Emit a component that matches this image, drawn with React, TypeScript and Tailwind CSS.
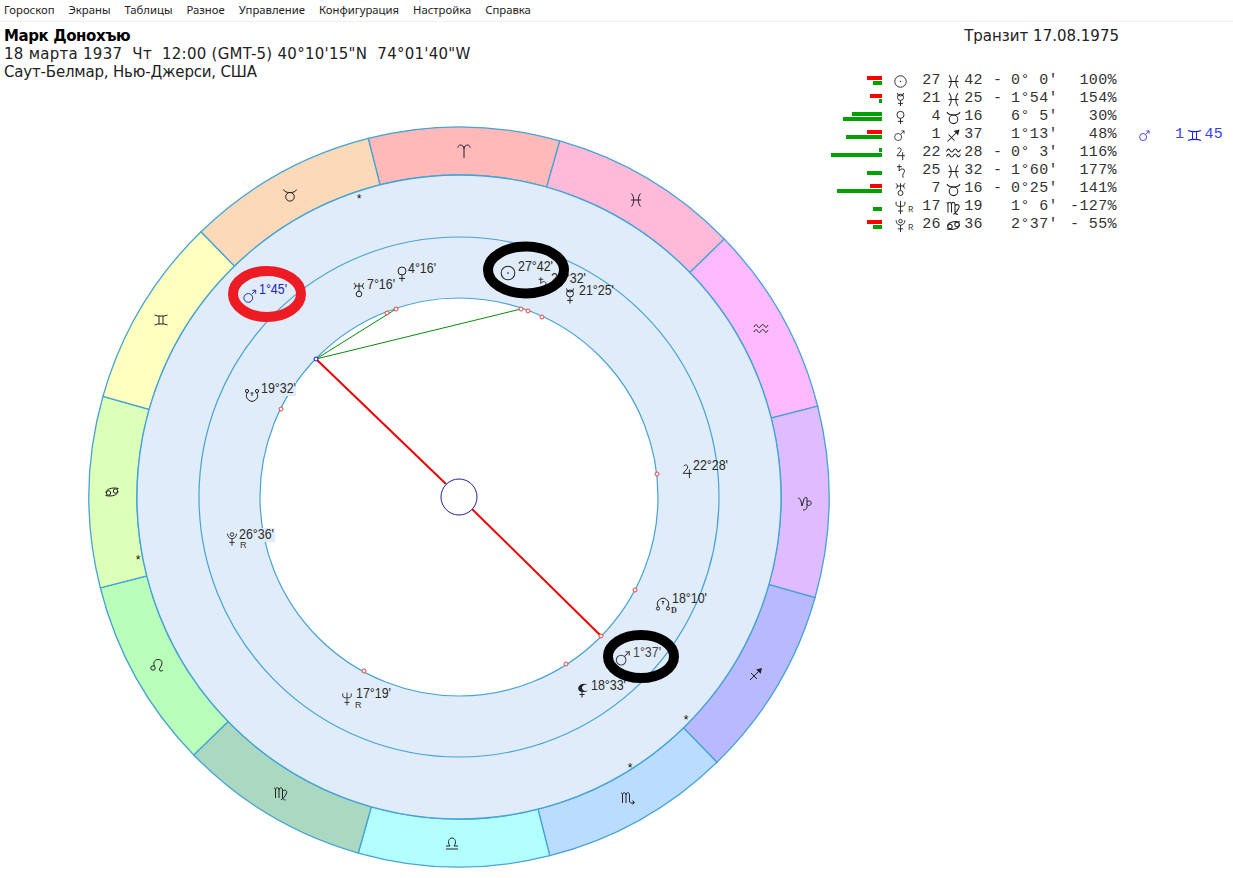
const MENU = ["Гороскоп", "Экраны", "Таблицы", "Разное", "Управление", "Конфигурация", "Настройка", "Справка"];

type GlyphDef = { d?: string; circles?: [number, number, number][]; solid?: string };

const GLYPHS: Record<string, GlyphDef> = {
  sun: { circles: [[0, 0, 6.5]], solid: "M-.8 0a.8.8 0 1 0 1.6 0a.8.8 0 1 0-1.6 0" },
  mercury: { d: "M-3.5-7.5A3.5 3.5 0 0 0 3.5-7.5M0 1V7.5M-2.8 4.4H2.8", circles: [[0, -2.5, 3.5]] },
  venus: { d: "M0 1V7.5M-3 4.4H3", circles: [[0, -3, 4]] },
  mars: { d: "M1.8-1.8 6-6M2.4-6H6V-2.4", circles: [[-1.8, 2, 4.6]] },
  jupiter: { d: "M-3.5-5C-2-7.5 1.5-6.5 .5-3L-4 2.5H5M2.5-1.5V7.5" },
  saturn: { d: "M-4-5.5H1.5M-1.5-8V-.5C.5-4 5-3.5 4.5-.5 4 2 1.5 3 3 7" },
  uranus: { d: "M-5-7C-3-5-3-3-5-1M5-7C3-5 3-3 5-1M-4-4H4M0-7V1", circles: [[0, 4, 2.8]] },
  neptune: { d: "M-5-6.5V-3.5C-5-.5 5-.5 5-3.5V-6.5M0-7.5V7.5M-3 4H3" },
  pluto: { d: "M-5-6C-5 1.5 5 1.5 5-6M0-.5V7.5M-3 3.8H3", circles: [[0, -5, 2]] },
  chiron: { d: "M-4.5-2.5A5.5 5.5 0 1 0 4.5-2.5M-1.5-2H1.5M0-2V1", circles: [[-5, -4, 1.6], [5, -4, 1.6]] },
  node: { d: "M-4.5 3A5.5 5.5 0 1 1 4.5 3M-1.2-2.5H1.2M0-2.5V.5", circles: [[-5, 4.5, 1.6], [5, 4.5, 1.6]] },
  lilith: {
    d: "M-1 1.5V7.5M-3.5 4.5H1.5",
    solid: "M5-5.5C-3-8.5-7-2-3.5 1-1 3 3 2 5 .5 1.5 1.5-1 .5-1-2.5-1-4.5 1.5-6 5-5.5Z",
  },
  aries: { d: "M0 6V-3C0-6-2-7-3.5-7-5-7-6-6-6-4.5M0-3C0-6 2-7 3.5-7 5-7 6-6 6-4.5" },
  taurus: { d: "M-6.5-5.5C-5.5-3-3-2.5 0-2.5S5.5-3 6.5-5.5", circles: [[0, 1.8, 4.3]] },
  gemini: { d: "M-6.5-5C-4-3.5 4-3.5 6.5-5M-6.5 5C-4 3.5 4 3.5 6.5 5M-2-4V4M2-4V4" },
  cancer: { d: "M-6 1C-6-3 0-5 6.5-3.5M6-1C6 3 0 5-6.5 3.5", circles: [[-3.5, 1, 2.2], [3.5, -1, 2.2]] },
  leo: { d: "M-2.5 1C-6-6 5-8 5-2 5 1 2 3 2.5 5 3 6.5 5 6.5 6 5", circles: [[-4, 3, 2.2]] },
  virgo: {
    d: "M-7-5C-6-5-5.5-4-5.5-3V5M-5.5-3C-5.5-6-2-6-2-3V5M-2-3C-2-6 1.5-6 1.5-3V4C1.5 6 3 7 4.5 7M1.5-2C4-4 6.5-2 5.5 0 4.5 3 2.5 5 0 7",
  },
  libra: { d: "M-6 6H6M-6 3H-2C-5-1-3-5 0-5 3-5 5-1 2 3H6" },
  scorpio: {
    d: "M-7-5C-6-5-5.5-4-5.5-3V5M-5.5-3C-5.5-6-2-6-2-3V5M-2-3C-2-6 1.5-6 1.5-3V3C1.5 5 3 5.5 6 4.5M4.5 2.5 6.5 4.5 4.5 6.5",
  },
  sagittarius: { d: "M-6 6 3-3M-5-1 1 5", solid: "M6-6 0-4.5 2-3 3-2 4.5 0Z" },
  capricorn: {
    d: "M-7-5C-5-5-4-3-3 3L-1-4C0-6 1-6 2-5V4C2 6 0 7-2 7M2-1C4-3 7-2 6 1 5 3 3 3 2 1",
  },
  aquarius: {
    d: "M-7-2C-5.5-5-4.5-5-3.5-3S-1-1 0-3 2.5-5 3.5-3 5.5-1 7-4M-7 3C-5.5 0-4.5 0-3.5 2S-1 4 0 2 2.5 0 3.5 2 5.5 4 7 1",
  },
  pisces: { d: "M-4.5-6.5C-1.5-3-1.5 3-4.5 6.5M4.5-6.5C1.5-3 1.5 3 4.5 6.5M-5 0H5" },
};

function GlyphShape({ name, color = "#111", sw = 1 }: { name: string; color?: string; sw?: number }) {
  const g = GLYPHS[name];
  return (
    <>
      {g.d && <path d={g.d} fill="none" stroke={color} strokeWidth={sw} />}
      {g.circles?.map((c, i) => (
        <circle key={i} cx={c[0]} cy={c[1]} r={c[2]} fill="none" stroke={color} strokeWidth={sw} />
      ))}
      {g.solid && <path d={g.solid} fill={color} />}
    </>
  );
}

function TableGlyph({ name, color, size = 15 }: { name: string; color?: string; size?: number }) {
  return (
    <svg width={size} height={size} viewBox="-8.5 -8.5 17 17" className="shrink-0">
      <GlyphShape name={name} color={color ?? "#222"} sw={1.05} />
    </svg>
  );
}

const ROWS = [
  { p: "sun", deg: "27", sign: "pisces", min: "42", dash: true, orb: "0° 0'", pct: "100%", top: 15, topRed: true, bottom: 9 },
  { p: "mercury", deg: "21", sign: "pisces", min: "25", dash: true, orb: "1°54'", pct: "154%", top: 12, topRed: true, bottom: 3 },
  { p: "venus", deg: "4", sign: "taurus", min: "16", dash: false, orb: "6° 5'", pct: "30%", top: 30, topRed: false, bottom: 39 },
  { p: "mars", deg: "1", sign: "sagittarius", min: "37", dash: false, orb: "1°13'", pct: "48%", top: 15, topRed: true, bottom: 36 },
  { p: "jupiter", deg: "22", sign: "aquarius", min: "28", dash: true, orb: "0° 3'", pct: "116%", top: 3, topRed: false, bottom: 51 },
  { p: "saturn", deg: "25", sign: "pisces", min: "32", dash: true, orb: "1°60'", pct: "177%", top: 0, topRed: false, bottom: 15 },
  { p: "uranus", deg: "7", sign: "taurus", min: "16", dash: true, orb: "0°25'", pct: "141%", top: 12, topRed: true, bottom: 45 },
  { p: "neptune", r: true, deg: "17", sign: "virgo", min: "19", dash: false, orb: "1° 6'", pct: "-127%", top: 0, topRed: false, bottom: 9 },
  { p: "pluto", r: true, deg: "26", sign: "cancer", min: "36", dash: false, orb: "2°37'", pct: "- 55%", top: 15, topRed: true, bottom: 9 },
];

const SIGNS = [
  { name: "aries", fill: "#ffb9b9", x: 464, y: 152 },
  { name: "pisces", fill: "#ffb9d9", x: 636, y: 200 },
  { name: "aquarius", fill: "#ffb9ff", x: 761, y: 329 },
  { name: "capricorn", fill: "#dfbcff", x: 805, y: 503 },
  { name: "sagittarius", fill: "#b9b9ff", x: 756, y: 674 },
  { name: "scorpio", fill: "#b9dcff", x: 628, y: 798 },
  { name: "libra", fill: "#b3ffff", x: 452, y: 843 },
  { name: "virgo", fill: "#aad8c0", x: 281, y: 793 },
  { name: "leo", fill: "#b9ffb9", x: 157, y: 665 },
  { name: "cancer", fill: "#dcffb9", x: 112, y: 492 },
  { name: "gemini", fill: "#ffffc0", x: 161, y: 320 },
  { name: "taurus", fill: "#fbd9b9", x: 290, y: 195 },
];

const PLANETS = [
  { g: "sun", gx: 508, gy: 273, t: "27°42'", tx: 518, ty: 271, scale: 1.05 },
  { g: "saturn", gx: 542, gy: 284, t: "25°32'", tx: 551, ty: 283, scale: 0.85 },
  { g: "mercury", gx: 570, gy: 296, t: "21°25'", tx: 579, ty: 295, scale: 1 },
  { g: "venus", gx: 402, gy: 274, t: "4°16'", tx: 408, ty: 273, scale: 1 },
  { g: "uranus", gx: 359, gy: 290, t: "7°16'", tx: 367, ty: 289, scale: 1 },
  { g: "mars", gx: 250, gy: 296, t: "1°45'", tx: 259, ty: 294, scale: 0.95, color: "#2222c4" },
  { g: "chiron", gx: 252, gy: 395, t: "19°32'", tx: 261, ty: 393, scale: 1 },
  { g: "jupiter", gx: 687, gy: 471, t: "22°28'", tx: 693, ty: 470, scale: 0.95 },
  { g: "node", gx: 663, gy: 604, t: "18°10'", tx: 672, ty: 603, scale: 1, sub: "D" },
  { g: "mars", gx: 623, gy: 658, t: "1°37'", tx: 633, ty: 657, scale: 1.05, color: "#444" },
  { g: "lilith", gx: 583, gy: 690, t: "18°33'", tx: 591, ty: 690, scale: 1 },
  { g: "pluto", gx: 232, gy: 539, t: "26°36'", tx: 239, ty: 539, scale: 0.9, sub: "R" },
  { g: "neptune", gx: 347, gy: 699, t: "17°19'", tx: 356, ty: 698, scale: 0.85, sub: "R" },
];

const RED_DOTS = [
  [281, 409], [387, 313], [396, 309], [521, 309], [528, 311], [542, 317],
  [657, 474], [635, 590], [601, 636], [566, 664], [364, 671],
];

const STARS = [[359, 203], [138, 564], [686, 724], [630, 772]];

const CX = 459;
const CY = 497;
const LINE = "#45a3d6";

function polar(r: number, deg: number) {
  const a = (deg * Math.PI) / 180;
  return [CX + r * Math.sin(a), CY - r * Math.cos(a)];
}

function sectorPath(i: number) {
  const a0 = -14.2 + i * 30;
  const a1 = a0 + 30;
  const [x0, y0] = polar(370, a0);
  const [x1, y1] = polar(370, a1);
  const [x2, y2] = polar(322, a1);
  const [x3, y3] = polar(322, a0);
  return `M${x0} ${y0}A370 370 0 0 1 ${x1} ${y1}L${x2} ${y2}A322 322 0 0 0 ${x3} ${y3}Z`;
}

function Chart() {
  return (
    <svg width={830} height={796} viewBox="0 82 830 796" className="block">
      {SIGNS.map((s, i) => (
        <path key={s.name} d={sectorPath(i)} fill={s.fill} stroke={LINE} strokeWidth={1.3} />
      ))}
      {SIGNS.map((s) => (
        <g key={s.name} transform={`translate(${s.x} ${s.y})`}>
          <GlyphShape name={s.name} color="#222" sw={1} />
        </g>
      ))}
      <circle cx={CX} cy={CY} r={322} fill="#e0ecf9" stroke={LINE} strokeWidth={1.3} />
      <circle cx={CX} cy={CY} r={260} fill="none" stroke={LINE} strokeWidth={1.2} />
      <circle cx={CX} cy={CY} r={199} fill="#fff" stroke={LINE} strokeWidth={1.2} />

      <path d="M316 359 396 309M316 359 521 309" stroke="#0a8a0a" fill="none" />
      <path d="M316 359 446 484M471 508 601 636" stroke="#f00000" strokeWidth={2} fill="none" />
      <circle cx={CX} cy={CY} r={18} fill="#fff" stroke="#2020a0" />
      {RED_DOTS.map(([x, y]) => (
        <circle key={`${x}-${y}`} cx={x} cy={y} r={2} fill="#fff" stroke="#f04040" />
      ))}
      <circle cx={316} cy={359} r={2} fill="#fff" stroke="#1010e0" />

      {STARS.map(([x, y]) => (
        <text key={x} x={x} y={y} textAnchor="middle" fontSize={12} fill="#111" fontFamily="'Liberation Sans', sans-serif">
          *
        </text>
      ))}

      <rect x={261} y={382} width={35} height={14} fill="#e0ecf9" />
      <rect x={239} y={528} width={36} height={14} fill="#e0ecf9" />

      {PLANETS.map((p) => (
        <g key={p.t}>
          <g transform={`translate(${p.gx} ${p.gy}) scale(${p.scale})`}>
            <GlyphShape name={p.g} color={p.color ?? "#222"} sw={1} />
          </g>
          <text
            x={p.tx}
            y={p.ty}
            fontSize={14.5}
            textLength={p.t.length === 6 ? 35 : 28}
            lengthAdjust="spacingAndGlyphs"
            fill={p.color ?? "#2a2a2a"}
            fontFamily="'Liberation Sans', sans-serif"
          >
            {p.t}
          </text>
          {p.sub && (
            <text
              x={p.gx + 8}
              y={p.gy + 9}
              fontSize={p.sub === "D" ? 8 : 9}
              fontWeight={p.sub === "D" ? 700 : 400}
              fill="#333"
              fontFamily={p.sub === "D" ? "'Liberation Serif', serif" : "'Liberation Sans', sans-serif"}
            >
              {p.sub}
            </text>
          )}
        </g>
      ))}

      <ellipse cx={267} cy={294} rx={34} ry={23} fill="none" stroke="#ed1c24" strokeWidth={10} />
      <ellipse cx={526} cy={270} rx={38} ry={23.5} fill="none" stroke="#000" strokeWidth={10} />
      <ellipse cx={641} cy={656.5} rx={33} ry={21.5} fill="none" stroke="#000" strokeWidth={10} />
    </svg>
  );
}

function PositionRow({ row }: { row: (typeof ROWS)[number] }) {
  return (
    <div className="flex h-[18px] items-center">
      <div className="mb-[2px] flex w-[52px] shrink-0 flex-col items-end gap-px">
        <div className={`h-1 ${row.topRed ? "bg-[#ff0000]" : "bg-[#00a000]"}`} style={{ width: row.top }} />
        <div className="h-1 bg-[#00a000]" style={{ width: row.bottom }} />
      </div>
      <div className="ml-[11px] flex w-[29px] shrink-0 items-center">
        <TableGlyph name={row.p} size={row.p === "mars" ? 13 : 15} />
        {row.r && <span className="mt-[6px] text-[9px] leading-none text-[#444]">R</span>}
      </div>
      <span className="w-[19px] shrink-0 text-right">{row.deg}</span>
      <span className="ml-[4px] w-[18px] shrink-0">
        <TableGlyph name={row.sign} size={17} />
      </span>
      <span className="w-[20px] shrink-0 text-right">{row.min}</span>
      <span className="ml-[10px] w-[18px] shrink-0">{row.dash ? "-" : ""}</span>
      <span className="w-[48px] shrink-0 whitespace-pre">{row.orb}</span>
      <span className="w-[58px] shrink-0 whitespace-pre text-right">{row.pct}</span>
      {row.p === "mars" && (
        <div className="flex items-center text-[#3c3cff]">
          <span className="ml-[21px] w-[37px]">
            <TableGlyph name="mars" color="#2020e0" size={13} />
          </span>
          <span>1</span>
          <span className="ml-[2px] w-[18px]">
            <TableGlyph name="gemini" color="#2020e0" size={17} />
          </span>
          <span>45</span>
        </div>
      )}
    </div>
  );
}

export default function App() {
  return (
    <div className="h-[878px] w-[1233px] overflow-hidden bg-white text-black [font-family:'DejaVu_Sans',sans-serif]">
      <nav className="flex h-[22px] items-center gap-[14px] border-b border-[#f0f0f0] pl-[4px] text-[11.3px] text-[#222] [font-family:'Noto_Sans',sans-serif]">
        {MENU.map((m) => (
          <span key={m}>{m}</span>
        ))}
      </nav>
      <div className="flex">
        <div className="w-[830px] shrink-0">
          <header className="h-[60px] pl-[4px] pt-[5px] text-[15px] leading-[18px] text-[#222]">
            <div className="font-bold tracking-[-0.4px] text-black">Марк Донохъю</div>
            <div className="whitespace-pre tracking-[0.27px]">18 марта 1937  Чт  12:00 (GMT-5) 40°10'15"N  74°01'40"W</div>
            <div className="tracking-[-0.18px]">Саут-Белмар, Нью-Джерси, США</div>
          </header>
          <Chart />
        </div>
        <aside className="flex-1">
          <div className="h-[50px] pr-[114px] pt-[5px] text-right text-[15px] leading-[18px] text-[#222]">
            Транзит 17.08.1975
          </div>
          <div className="text-[15px] tracking-[0.4px] text-[#333] [font-family:'Liberation_Mono',monospace]">
            {ROWS.map((r) => (
              <PositionRow key={r.p} row={r} />
            ))}
          </div>
        </aside>
      </div>
    </div>
  );
}
